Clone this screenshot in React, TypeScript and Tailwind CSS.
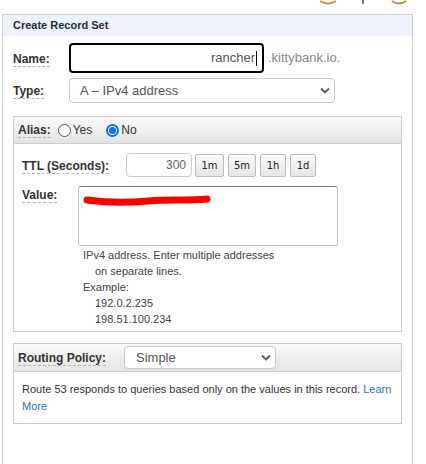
import React from "react";

const FONT = { fontFamily: '"Liberation Sans", Arial, sans-serif' };

const Label = ({ children }: { children: React.ReactNode }) => (
  <span className="border-b border-dashed border-[#b5b5b5] text-[12px] font-bold leading-[14px] text-[#333]">
    {children}
  </span>
);

const Chevron = () => (
  <svg width="10" height="7" viewBox="0 0 10 7">
    <path d="M1 1.5 L5 5.5 L9 1.5" fill="none" stroke="#555" strokeWidth="1.8" />
  </svg>
);

const TtlButton = ({ text, w }: { text: string; w: string }) => (
  <div
    className={`flex h-[23px] items-center justify-center rounded-[2px] border border-[#bdbdbd] bg-gradient-to-b from-[#fafafa] to-[#e6e6e6] text-[10px] text-[#222] ${w}`}
    style={{ fontFamily: '"DejaVu Sans", Verdana, sans-serif' }}
  >
    {text}
  </div>
);

const Radio = ({ on }: { on?: boolean }) => (
  <span
    className={
      on
        ? "flex h-[13px] w-[13px] items-center justify-center rounded-full border-2 border-[#0b6fe8] bg-white"
        : "h-[13px] w-[13px] rounded-full border border-[#555] bg-white"
    }
  >
    {on && <span className="h-[7px] w-[7px] rounded-full bg-[#0b6fe8]" />}
  </span>
);

export default function App() {
  return (
    <div className="h-[464px] w-[426px] overflow-hidden bg-white" style={FONT}>
      {/* cut-off toolbar icons above the panel */}
      <div className="flex h-[14px] items-start">
        <svg width="426" height="14" viewBox="0 0 426 14">
          <path d="M320 1 Q328 6 336 1" fill="none" stroke="#d58a3c" strokeWidth="2" />
          <rect x="362" y="0" width="2" height="4" fill="#777" />
          <path d="M392 1 Q399 6 406 1" fill="none" stroke="#d58a3c" strokeWidth="2" />
        </svg>
      </div>

      <div className="ml-[2px] h-[460px] w-[411px] border border-b-0 border-[#cfcfcf]">
        <div className="flex h-[21px] items-center bg-[#eef3fb] pl-[10px] text-[11px] font-bold text-[#1f2b3d]">
          Create Record Set
        </div>

        <div className="px-[10px] pt-[7px]">
          <div className="flex items-center">
            <div className="w-[56px] leading-[14px]">
              <Label>Name:</Label>
            </div>
            <div className="flex h-[30px] w-[195px] items-center justify-end rounded-[4px] border-2 border-black pr-[5px] text-[13px] text-[#555]">
              rancher<span className="ml-[1px] h-[15px] w-[1px] bg-black" />
            </div>
            <span className="ml-[4px] text-[13px] text-[#888]">.kittybank.io.</span>
          </div>

          <div className="mt-[5px] flex items-center">
            <div className="w-[56px] leading-[14px]">
              <Label>Type:</Label>
            </div>
            <div className="flex h-[25px] w-[266px] items-center justify-between rounded-[4px] border border-[#c8c8c8] pl-[10px] pr-[4px] text-[13px] text-[#555]">
              <span>A – IPv4 address</span>
              <Chevron />
            </div>
          </div>

          {/* Alias box */}
          <div className="mt-[13px] w-[389px] border border-[#cfcfcf]">
            <div className="flex h-[27px] items-center gap-[5px] border-b border-[#cfcfcf] bg-gradient-to-b from-[#fafafa] to-[#e4e4e4] pl-[4px] text-[12px] text-[#333]">
              <Label>Alias:</Label>
              <span className="ml-[2px] flex items-center gap-[2px]">
                <Radio />
                <span className="text-[12px]">Yes</span>
              </span>
              <span className="ml-[9px] flex items-center gap-[2px]">
                <Radio on />
                <span className="text-[12px]">No</span>
              </span>
            </div>

            <div className="px-[8px] pb-[4px] pt-[9px]">
              <div className="flex items-center">
                <div className="w-[104px] leading-[14px]">
                  <Label>TTL (Seconds):</Label>
                </div>
                <div className="flex h-[24px] w-[66px] items-center justify-end rounded-[4px] border border-[#cccccc] pr-[5px] text-[12px] text-[#666]">
                  300
                </div>
                <div className="ml-[3px] flex gap-[4px]">
                  <TtlButton text="1m" w="w-[29px]" />
                  <TtlButton text="5m" w="w-[28px]" />
                  <TtlButton text="1h" w="w-[26px]" />
                  <TtlButton text="1d" w="w-[26px]" />
                </div>
              </div>

              <div className="mt-[9px] flex items-start">
                <div className="w-[56px] pt-[1px] leading-[14px]">
                  <Label>Value:</Label>
                </div>
                <div className="flex flex-col">
                  <div className="relative h-[60px] w-[260px] rounded-[3px] border border-[#c4c4c4] border-t-[#777]">
                    <svg className="absolute left-[4px] top-[6px]" width="128" height="14" viewBox="0 0 128 14">
                      <path
                        d="M4 7 C25 10 45 10 65 8 C85 6 105 8 124 6"
                        fill="none"
                        stroke="#ff0000"
                        strokeWidth="7"
                        strokeLinecap="round"
                      />
                    </svg>
                  </div>
                  <div className="pl-[5px] pt-[1px] text-[11px] leading-[16px] text-[#444]">
                    <div>IPv4 address. Enter multiple addresses</div>
                    <div className="pl-[12px]">on separate lines.</div>
                    <div>Example:</div>
                    <div className="pl-[12px]">192.0.2.235</div>
                    <div className="pl-[12px]">198.51.100.234</div>
                  </div>
                </div>
              </div>
            </div>
          </div>

          {/* Routing policy box */}
          <div className="mt-[11px] w-[389px] border border-[#cfcfcf]">
            <div className="flex h-[28px] items-center border-b border-[#cfcfcf] bg-gradient-to-b from-[#fafafa] to-[#e4e4e4] pl-[4px]">
              <div className="w-[106px] leading-[14px]">
                <Label>Routing Policy:</Label>
              </div>
              <div className="flex h-[23px] w-[152px] items-center justify-between rounded-[4px] border border-[#c8c8c8] bg-white pl-[11px] pr-[4px] text-[13px] text-[#555]">
                <span>Simple</span>
                <Chevron />
              </div>
            </div>
            <div className="pb-[8px] pl-[8px] pr-[2px] pt-[9px] text-[11px] leading-[17px] text-[#333]">
              Route 53 responds to queries based only on the values in this record.{" "}
              <span className="text-[#2a72c0]">Learn More</span>
            </div>
          </div>
        </div>
      </div>
    </div>
  );
}
